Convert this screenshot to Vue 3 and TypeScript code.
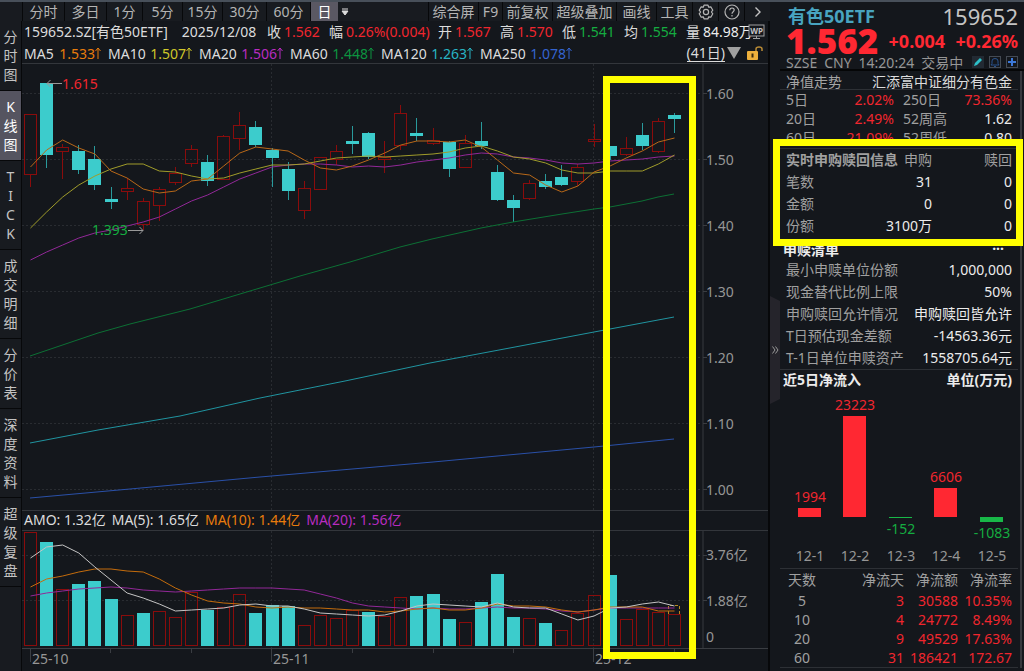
<script setup lang="ts">
interface Candle { up: boolean; top: number; bottom: number; high: number; low: number }

const x0 = 30.5
const step = 16.1
const cx = (i: number): number => Math.floor(x0 + step * i)

const raw: [number, number, number, number, number][] = [
  [1, 114, 174, 114, 187], [0, 83, 155, 83, 168], [1, 147, 151, 144, 179], [0, 151, 170, 145, 174],
  [0, 159, 185, 146, 190], [0, 199, 202, 187, 209], [1, 188, 191, 178, 200], [1, 201, 224, 198, 230],
  [1, 189, 205, 187, 221], [1, 173, 182, 167, 185], [1, 149, 163, 145, 167], [0, 162, 181, 155, 186],
  [1, 136, 179, 135, 180], [1, 125, 138, 112, 150], [0, 127, 145, 121, 147], [0, 150, 158, 148, 187],
  [0, 169, 191, 162, 200], [1, 188, 210, 181, 219], [1, 157, 189, 157, 189], [1, 151, 159, 145, 165],
  [0, 141, 144, 126, 154], [0, 133, 157, 132, 159], [1, 157, 159, 141, 173], [1, 113, 145, 105, 150],
  [0, 133, 136, 118, 141], [1, 140, 143, 128, 145], [0, 142, 169, 141, 177], [1, 143, 167, 135, 167],
  [0, 141, 146, 122, 149], [0, 172, 200, 165, 201], [0, 200, 208, 195, 222], [1, 183, 198, 180, 200],
  [0, 181, 187, 174, 189], [0, 177, 185, 165, 186], [1, 167, 181, 164, 186], [1, 139, 141, 124, 147],
  [0, 146, 156, 146, 160], [1, 148, 154, 137, 156], [0, 135, 146, 123, 150], [1, 121, 151, 118, 153],
  [0, 115, 119, 113, 133],
]
const candles: Candle[] = raw.map(([u, top, bottom, high, low]) => ({ up: u === 1, top, bottom, high, low }))

const volumes: [number, number][] = [
  [1, 532], [0, 542], [1, 589], [0, 584], [0, 581], [0, 599], [1, 615], [0, 613], [1, 611], [1, 617],
  [1, 592], [0, 610], [1, 607], [1, 594], [0, 613], [0, 605], [0, 606], [1, 625], [1, 615], [1, 618],
  [1, 610], [0, 612], [1, 616], [1, 597], [0, 596], [0, 594], [0, 619], [1, 622], [0, 602], [0, 574],
  [0, 617], [1, 618], [0, 623], [1, 630], [1, 613], [1, 595], [0, 575], [1, 619], [1, 609], [1, 612],
  [1, 614],
]

const line = (ys: number[]): string => ys.map((y, i) => `${(x0 + step * i).toFixed(1)},${y}`).join(' ')

const priceLines: { cls: string; points: string }[] = [
  { cls: 'ma250', points: '30,498 130,489 260,477 433,462 594,447 674,439' },
  { cls: 'ma120', points: '30,443 98,430 180,416 260,398 345,381 430,363 515,347 594,332 674,317' },
  { cls: 'ma60', points: '30,356 98,333 130,324 190,309 260,288 300,276 350,262 400,247 432,239 481,228 513,222 562,214 594,209 610,207 642,201 658,197 674,194' },
  { cls: 'ma20', points: line([260, 252, 245, 238, 233, 230, 226, 222, 217, 209, 201, 195, 187, 179, 173, 167, 165, 164, 164, 165, 167, 166, 167, 165, 162, 160, 158, 155, 153, 154, 157, 158, 160, 163, 164, 163, 161, 160, 159, 157, 156]) },
  { cls: 'ma10', points: line([228, 212, 197, 185, 176, 169, 164, 164, 171, 172, 176, 179, 178, 173, 169, 165, 165, 164, 161, 158, 157, 156, 157, 156, 155, 154, 152, 148, 146, 151, 157, 159, 163, 170, 173, 173, 171, 171, 171, 164, 155]) },
  { cls: 'ma5', points: line([167, 150, 140, 148, 154, 171, 178, 189, 193, 191, 181, 179, 166, 153, 147, 149, 151, 160, 168, 170, 166, 160, 153, 145, 141, 141, 142, 140, 147, 160, 173, 175, 185, 192, 186, 172, 166, 158, 151, 142, 138]) },
]

const volumeLines: { cls: string; points: string }[] = [
  { cls: 'v20', points: line([596, 593, 591, 589, 588, 587, 588, 590, 591, 592, 591, 590, 589, 588, 588, 588, 589, 590, 594, 598, 603, 606, 607, 608, 609, 608, 609, 609, 608, 607, 608, 608, 609, 611, 612, 610, 608, 608, 608, 608, 608]) },
  { cls: 'v10', points: line([587, 579, 576, 572, 569, 569, 571, 572, 579, 588, 595, 601, 603, 604, 607, 608, 607, 608, 608, 609, 610, 610, 612, 611, 609, 608, 610, 610, 608, 604, 606, 606, 607, 610, 612, 610, 607, 607, 607, 611, 611]) },
  { cls: 'v5', points: line([558, 547, 545, 553, 567, 580, 593, 598, 604, 611, 610, 609, 608, 605, 604, 606, 606, 609, 613, 614, 615, 616, 615, 611, 606, 604, 605, 606, 607, 603, 607, 608, 608, 614, 620, 616, 608, 607, 604, 602, 606]) },
]

const priceAxis = [
  { label: '1.60', y: 94 }, { label: '1.50', y: 160 }, { label: '1.40', y: 226 }, { label: '1.30', y: 292 },
  { label: '1.20', y: 358 }, { label: '1.10', y: 424 }, { label: '1.00', y: 490 },
]
const months = [{ label: '25-10', x: 30 }, { label: '25-11', x: 271 }, { label: '25-12', x: 593 }]
const smallTicks = [110, 191, 352, 433, 513, 674]

const periods = [
  { t: '分时', c: 'w42' }, { t: '多日', c: 'w42' }, { t: '1分', c: 'w36' }, { t: '5分', c: 'w40' },
  { t: '15分', c: 'w40' }, { t: '30分', c: 'w44' }, { t: '60分', c: 'w44' }, { t: '日', c: 'w28 on' },
]
const tools = [
  { t: '综合屏', c: 'w50' }, { t: 'F9', c: 'w24' }, { t: '前复权', c: 'w50' },
  { t: '超级叠加', c: 'w64' }, { t: '画线', c: 'w40' }, { t: '工具', c: 'w36' },
]
const sideTabs = ['分时图', 'K线图', 'TICK', '成交明细', '分价表', '深度资料', '超级复盘']

const quotes = [
  { k: '收', v: '1.562', c: 'red', w: 'q62' }, { k: '幅', v: '0.26%(0.004)', c: 'red', w: 'q109' },
  { k: '开', v: '1.567', c: 'red', w: 'q62' }, { k: '高', v: '1.570', c: 'red', w: 'q62' },
  { k: '低', v: '1.541', c: 'green', w: 'q62' }, { k: '均', v: '1.554', c: 'green', w: 'q62' },
  { k: '量', v: '84.98万', c: 'white', w: 'q62' },
]
const averages = [
  { k: 'MA5', v: '1.533', c: 'orange', w: 'm84' }, { k: 'MA10', v: '1.507', c: 'yellow', w: 'm91' },
  { k: 'MA20', v: '1.506', c: 'purple', w: 'm91' }, { k: 'MA60', v: '1.448', c: 'dgreen', w: 'm91' },
  { k: 'MA120', v: '1.263', c: 'cyan', w: 'm99' }, { k: 'MA250', v: '1.078', c: 'blue', w: 'm99' },
]

const perf = [
  ['5日', '2.02%', '250日', '73.36%', 'red'],
  ['20日', '2.49%', '52周高', '1.62', 'white'],
  ['60日', '21.09%', '52周低', '0.80', 'white'],
]
const subs = [['笔数', '31', '0'], ['金额', '0', '0'], ['份额', '3100万', '0']]
const list = [
  ['最小申赎单位份额', '1,000,000'], ['现金替代比例上限', '50%'], ['申购赎回允许情况', '申购赎回皆允许'],
  ['T日预估现金差额', '-14563.36元'], ['T-1日单位申赎资产', '1558705.64元'],
]
const flows = [
  { d: '12-1', v: 1994 }, { d: '12-2', v: 23223 }, { d: '12-3', v: -152 }, { d: '12-4', v: 6606 }, { d: '12-5', v: -1083 },
].map((f, i) => {
  const h = Math.max(1, Math.round(Math.abs(f.v) / 230))
  return { ...f, x: Math.round(810 + 45.4 * i), h, y: f.v > 0 ? 517 - h : 517, ty: f.v > 0 ? 517 - h - 6 : 517 + h + 16 }
})
const days = [
  ['5', '3', '30588', '10.35%'], ['10', '4', '24772', '8.49%'],
  ['20', '9', '49529', '17.63%'], ['60', '31', '186421', '172.67'],
]
</script>

<template>
  <div class="app">
    <section class="left">
      <nav class="toolbar">
        <button v-for="p in periods" :key="p.t" type="button" :class="p.c">{{ p.t }}</button>
        <button type="button" class="drop" aria-label="更多周期">
          <svg width="8" height="8" viewBox="0 0 8 8"><path d="M1 1h6M1 3h6L4 7z" stroke="#ddd" fill="#ddd" stroke-width="1" /></svg>
        </button>
        <span class="spacer"></span>
        <button v-for="t in tools" :key="t.t" type="button" :class="t.c">{{ t.t }}</button>
        <button type="button" class="w26" aria-label="设置">
          <svg width="16" height="16" viewBox="0 0 16 16" fill="none" stroke="#b4b4b4" stroke-width="1.2">
            <path d="M6 1.2h4l.7 2 2.1-.4 2 3.4L13.400 8l1.400 1.800-2 3.400-2.100-.4-.7 2H6l-.7-2-2.100.4-2-3.400L2.600 8 1.200 6.200l2-3.400 2.100.4z" stroke-linejoin="round" />
            <circle cx="8" cy="8" r="2.600" />
          </svg>
        </button>
        <button type="button" class="w26" aria-label="帮助">
          <svg width="16" height="16" viewBox="0 0 16 16" fill="none" stroke="#b4b4b4" stroke-width="1.2">
            <circle cx="8" cy="8" r="7" />
            <path d="M5.800 6.200c0-3 4.500-2.800 4.400-.1C10.200 7.700 8 7.800 8 9.700M8 11v1.400" />
          </svg>
        </button>
        <button type="button" class="w26" aria-label="展开">
          <svg width="8" height="12" viewBox="0 0 8 12" fill="none" stroke="#c4c4c4" stroke-width="1.400"><path d="M1.500 1.500L6 6l-4.500 4.500" /></svg>
        </button>
      </nav>

      <div class="body">
        <aside class="side">
          <button v-for="s in sideTabs" :key="s" type="button" :class="{ on: s === 'K线图' }">
            <span v-for="(ch, i) in s.split('')" :key="i">{{ ch }}</span>
          </button>
        </aside>

        <main class="main">
          <div class="row info">
            <span class="symbol">159652.SZ[有色50ETF]</span>
            <span class="date">2025/12/08</span>
            <span v-for="q in quotes" :key="q.k" class="quote" :class="q.w">{{ q.k }}<b :class="q.c">{{ q.v }}</b></span>
            <svg class="wp" width="18" height="16" viewBox="0 0 18 16">
              <rect x="1" y="1" width="15" height="11" fill="#14171c" stroke="#a0a0a0" />
              <path d="M8.500 12v2M5 14.500h7" stroke="#a0a0a0" />
              <text x="8.500" y="10" text-anchor="middle" class="wptext">WP</text>
            </svg>
          </div>
          <div class="row avg">
            <span v-for="m in averages" :key="m.k" class="ma" :class="m.w">{{ m.k }}<b :class="m.c">{{ m.v }}<svg width="6" height="12" viewBox="0 0 6 12" fill="none" stroke="currentColor"><path d="M3 12V1M0.500 4L3 1l2.500 3" /></svg></b></span>
            <span class="range">
              <a href="#">(41日)</a>
              <svg width="14" height="12" viewBox="0 0 14 12"><path d="M0 0h14L7 12z" fill="#a0a0a0" /></svg>
              <svg class="lock" width="16" height="14" viewBox="0 0 16 14">
                <rect x="0" y="5" width="11" height="9" rx="1" fill="#eeb03c" />
                <path d="M9 5V3q0-2 3-2t3 2v2" fill="none" stroke="#b88a35" stroke-width="1.500" />
                <path d="M5.500 7.500v4" stroke="#3a2b10" stroke-width="2" />
              </svg>
            </span>
          </div>

          <svg class="chart" viewBox="22 64 746 446" role="img" aria-label="日K线">
            <g class="grid">
              <path v-for="a in priceAxis" :key="a.label" :d="`M22 ${a.y - 0.5}H702`" />
              <path d="M271.500 64V510M593.500 64V510" />
            </g>
            <path d="M703 64V510" class="axis" />
            <g v-for="(c, i) in candles" :key="i" :class="c.up ? 'up' : 'down'">
              <path v-if="c.high < c.top" :d="`M${cx(i) + 0.5} ${c.high}V${c.top}`" />
              <path v-if="c.low > c.bottom" :d="`M${cx(i) + 0.5} ${c.bottom}V${c.low}`" />
              <rect v-if="c.up" :x="cx(i) - 5.5" :y="c.top + 0.5" width="12" :height="c.bottom - c.top" />
              <rect v-else :x="cx(i) - 6" :y="c.top" width="13" :height="c.bottom - c.top" />
            </g>
            <polyline v-for="l in priceLines" :key="l.cls" :class="l.cls" class="curve" :points="l.points" />
            <path d="M62 83.500H47M50.500 80L47 83.500l3.500 3.500M128 230.500h15M139.500 227l3.500 3.500-3.500 3.500" class="arrow" />
            <text x="62" y="89" class="tred">1.615</text>
            <text x="92" y="235" class="tgreen">1.393</text>
            <g v-for="a in priceAxis" :key="a.y">
              <path :d="`M703 ${a.y - 0.5}h4`" class="tick" />
              <text x="706" :y="a.y + 5" class="tgray">{{ a.label }}</text>
            </g>
          </svg>

          <div class="row amo">
            <span>AMO: 1.32亿</span><span>MA(5): 1.65亿</span>
            <span class="orange">MA(10): 1.44亿</span><span class="purple">MA(20): 1.56亿</span>
          </div>

          <svg class="chart" viewBox="22 531 746 140" role="img" aria-label="成交额">
            <g class="grid">
              <path d="M22 555.500H702M22 600.500H702M271.500 531V648M593.500 531V648" />
            </g>
            <path d="M703 531V648" class="axis" />
            <path d="M22 648.500H768" class="tick" />
            <g v-for="(v, i) in volumes" :key="i" :class="v[0] ? 'up' : 'down'">
              <rect v-if="v[0]" :x="cx(i) - 5.5" :y="v[1] + 0.5" width="12" :height="645 - v[1]" />
              <rect v-else :x="cx(i) - 6" :y="v[1]" width="13" :height="646 - v[1]" />
            </g>
            <path d="M668.500 614v-8.500h11v8.500" class="forecast" />
            <polyline v-for="l in volumeLines" :key="l.cls" :class="l.cls" class="curve" :points="l.points" />
            <path d="M703 555.500h4M703 600.500h4" class="tick" />
            <text x="706" y="560" class="tgray">3.76亿</text>
            <text x="706" y="606" class="tgray">1.88亿</text>
            <text x="706" y="642" class="tgray">0</text>
            <path v-for="t in smallTicks" :key="t" :d="`M${t + 0.5} 649v4`" class="tick" />
            <g v-for="m in months" :key="m.label">
              <path :d="`M${m.x + 0.5} 649v13`" class="tick" />
              <text :x="m.x + 2" y="664" class="tgray">{{ m.label }}</text>
            </g>
          </svg>
          <div class="mark candles-mark"></div>
        </main>
      </div>
    </section>

    <aside class="panel">
      <button type="button" class="fold" aria-label="收起">
        <svg width="7" height="8" viewBox="0 0 7 8" fill="none" stroke="#999"><path d="M0.500 0.500L3 4 .5 7.500M3.500 .5L6 4 3.500 7.500" /></svg>
      </button>
      <header class="head">
        <div class="name"><strong>有色50ETF</strong><span>159652</span></div>
        <div class="price"><strong>1.562</strong><span>+0.004</span><span>+0.26%</span></div>
        <div class="meta">
          <span>SZSE</span><span>CNY</span><span>14:20:24</span><span>交易中</span>
          <span class="icons">
            <button type="button" aria-label="编辑"><svg width="12" height="12" viewBox="0 0 12 12"><rect width="12" height="12" fill="#222a33" /><path d="M2 10l1-3 5-5 2 2-5 5z" fill="#2dbfc8" /></svg></button>
            <button type="button" aria-label="提醒"><svg width="12" height="12" viewBox="0 0 12 12" fill="none"><rect x=".5" y=".5" width="11" height="11" stroke="#444a53" /><path d="M2 9h8L9 7.500V5q0-2.500-3-2.500T3 5v2.500zM5 10.500h2" stroke="#29538d" /></svg></button>
            <button type="button" aria-label="添加"><svg width="12" height="12" viewBox="0 0 12 12" fill="none"><rect x=".5" y=".5" width="11" height="11" stroke="#444a53" /><path d="M6 2v8M2 6h8" stroke="#3c78d8" stroke-width="2" /></svg></button>
          </span>
        </div>
      </header>

      <div class="content">
        <div class="trend"><span>净值走势</span><a href="#">汇添富中证细分有色金</a></div>
        <table class="perf">
          <tbody>
            <tr v-for="r in perf" :key="r[0]">
              <th scope="row">{{ r[0] }}</th><td class="red">{{ r[1] }}</td>
              <th scope="row" class="second">{{ r[2] }}</th><td :class="r[4]">{{ r[3] }}</td>
            </tr>
          </tbody>
        </table>
        <table class="subs">
          <thead><tr><th class="title">实时申购赎回信息</th><th>申购</th><th>赎回</th></tr></thead>
          <tbody>
            <tr v-for="r in subs" :key="r[0]"><th scope="row">{{ r[0] }}</th><td>{{ r[1] }}</td><td>{{ r[2] }}</td></tr>
          </tbody>
        </table>
        <div class="caption low"><h2>申赎清单</h2><button type="button" aria-label="更多">···</button></div>
        <dl class="list">
          <div v-for="r in list" :key="r[0]"><dt>{{ r[0] }}</dt><dd>{{ r[1] }}</dd></div>
        </dl>
        <div class="caption flow-caption"><h2>近5日净流入</h2><h2>单位(万元)</h2></div>
        <svg class="flow" viewBox="780 391 238 177" role="img" aria-label="近5日净流入">
          <g v-for="f in flows" :key="f.d">
            <rect :x="f.x - 12" :y="f.y" width="23" :height="f.h" :class="f.v > 0 ? 'in' : 'out'" />
            <text :x="f.x" :y="f.ty" :class="f.v > 0 ? 'tred' : 'tgreen'" text-anchor="middle">{{ f.v }}</text>
            <text :x="f.x" y="561" class="tgray" text-anchor="middle">{{ f.d }}</text>
          </g>
        </svg>
        <table class="days">
          <thead><tr><th>天数</th><th>净流天</th><th>净流额</th><th>净流率</th></tr></thead>
          <tbody>
            <tr v-for="r in days" :key="r[0]"><th scope="row">{{ r[0] }}</th><td>{{ r[1] }}</td><td>{{ r[2] }}</td><td>{{ r[3] }}</td></tr>
          </tbody>
        </table>
      </div>
      <div class="mark subs-mark"></div>
    </aside>
  </div>
</template>

<style>
body { margin: 0; background: #14171c; }
</style>

<style scoped>
.app, .app * { box-sizing: border-box; }
.app {
  display: grid;
  grid-template-columns: minmax(0, 1fr) 254px;
  min-height: 100vh;
  border-top: 2px solid #48505a;
  background: #14171c;
  color: #dcdcdc;
  font: 14px/20px "Noto Sans", "Noto Sans CJK SC", sans-serif;
  white-space: nowrap;
  overflow: hidden;
}
button { padding: 0; margin: 0; border: 0; background: none; color: inherit; font: inherit; }
a { color: inherit; text-decoration: none; }
svg { display: block; }
b { font-weight: 400; }

.toolbar { display: flex; height: 19px; padding-left: 22px; background: #181b20; }
.toolbar button {
  flex: none; display: flex; align-items: center; justify-content: center;
  border-left: 1px solid #07080a; color: #b4b4b4; line-height: 19px;
}
.toolbar .drop { width: 14px; border: 0; }
.toolbar .on { background: #5a5863; color: #fff; }
.spacer { flex: 1; }
.w24 { width: 24px; } .w26 { width: 26px; } .w28 { width: 28px; } .w36 { width: 36px; }
.w40 { width: 40px; } .w42 { width: 42px; } .w44 { width: 44px; } .w50 { width: 50px; } .w64 { width: 64px; }

.body { display: flex; }
.side { width: 22px; flex: none; background: #181b20; border-right: 1px solid #07080a; }
.side button { display: block; width: 100%; padding: 6px 0; border-bottom: 1px solid #07080a; color: #c4c4c4; }
.side button span { display: block; line-height: 19px; text-align: center; }
.side .on { background: #555460; color: #fff; }

.main { position: relative; flex: 1; min-width: 0; border-right: 2px solid #07080a; }
.row { display: flex; align-items: center; padding-left: 2px; }
.info { height: 22px; }
.avg { height: 21px; line-height: 21px; border-bottom: 1px solid #33363b; }
.amo { height: 21px; line-height: 18px; gap: 6px; align-items: flex-start; border-top: 1px solid #33363b; border-bottom: 1px solid #33363b; }
.symbol { width: 159px; }
.date { width: 86px; }
.quote { display: flex; gap: 3px; flex: none; }
.q62 { width: 62px; } .q109 { width: 109px; }
.wp { flex: none; margin-left: auto; margin-right: 2px; z-index: 1; }
.wptext { font: 700 8px "Noto Sans", sans-serif; fill: #c4c4c4; }
.ma { display: flex; justify-content: space-between; padding-right: 7px; flex: none; }
.ma b { display: flex; align-items: center; }
.m84 { width: 84px; } .m91 { width: 91px; } .m99 { width: 99px; }
.range { display: flex; align-items: center; gap: 2px; margin-left: auto; padding-right: 5px; }
.range a { line-height: 16px; border-bottom: 1px solid #dcdcdc; }
.lock { margin-left: 4px; }

.red { color: #f0262e; } .green { color: #14ac40; } .white { color: #ececec; }
.orange { color: #e87c0c; } .yellow { color: #cfc72a; } .purple { color: #b82cc0; }
.dgreen { color: #0c9440; } .cyan { color: #28b4c4; } .blue { color: #3464d0; }

.chart, .flow { width: 100%; height: auto; font: 14px "Noto Sans", "Noto Sans CJK SC", sans-serif; }
.grid { fill: none; stroke: #292c31; stroke-dasharray: 2 2; }
.axis { stroke: #25282d; stroke-width: 2; }
.tick { stroke: #3a3d42; }
.up { fill: none; stroke: #8a0c0c; }
.down { fill: #3ccccc; }
.down path { stroke: #299a9c; }
.curve { fill: none; stroke-width: 1; }
.ma5 { stroke: #b86818; } .ma10 { stroke: #a09c2a; } .ma20 { stroke: #922898; }
.ma60 { stroke: #0c7034; } .ma120 { stroke: #2094a0; } .ma250 { stroke: #2a50a8; }
.v5 { stroke: #c4c4c4; } .v10 { stroke: #c46c0c; } .v20 { stroke: #922898; }
.arrow { fill: none; stroke: #999; }
.forecast { fill: none; stroke: #b88a20; stroke-dasharray: 3 2; }
.tred { fill: #f0262e; } .tgreen { fill: #14ac40; } .tgray { fill: #969696; }

.mark { position: absolute; border: 7px solid #ff0; pointer-events: none; }
.candles-mark { left: 77.9%; width: 12.5%; top: 55px; bottom: 12px; }
.subs-mark { left: 3px; right: 1px; top: 137px; height: 107px; }

.panel { position: relative; }
.fold {
  position: absolute; left: 0; top: 294px; width: 10px; height: 108px; background: #25242b;
  display: flex; align-items: center; justify-content: center;
  clip-path: polygon(0 0, 100% 5px, 100% 103px, 0 100%);
}
.head { height: 69px; padding: 0 6px; margin-left: 10px; border-bottom: 2px solid #050607; }
.name { display: flex; justify-content: space-between; height: 25px; line-height: 28px; font-size: 22px; color: #c4c4c4; }
.name strong { font-size: 18px; color: #48a4c0; padding-left: 2px; }
.price { display: flex; align-items: center; justify-content: space-between; height: 28px; line-height: 28px; font-size: 18px; font-weight: 700; color: #ff2832; }
.price strong { font-size: 35px; }
.meta { display: flex; gap: 7px; height: 14px; line-height: 16px; color: #969696; }
.icons { display: flex; gap: 5px; margin-left: auto; align-items: center; }
.content { padding: 0 2px 0 10px; margin-right: 2px; border-right: 2px solid #36383d; }
.trend { display: flex; justify-content: space-between; height: 19px; padding: 0 6px; line-height: 21px; border-bottom: 1px solid #2d3035; color: #a4a4a4; }
.trend a { color: #dcdcdc; }
table { width: 100%; table-layout: fixed; border-collapse: separate; border-spacing: 0; padding: 0 6px; }
th, td { padding: 0; font-weight: 400; text-align: right; }
th { color: #a0a0a0; }
tbody th { text-align: left; }
.perf { padding-bottom: 1px; border-bottom: 1px solid #2d3035; }
.perf th, .perf td { height: 19px; line-height: 19px; }
.perf th:first-child { width: 48px; }
.perf td:nth-child(2) { width: 60px; }
.perf .second { padding-left: 9px; }
.subs th, .subs td { height: 22px; line-height: 22px; color: #ececec; }
.subs th { color: #a0a0a0; }
.subs th:first-child { width: 98px; text-align: left; }
.subs th:nth-child(2) { width: 48px; }
.subs .title { font-weight: 700; }
.caption { display: flex; justify-content: space-between; height: 22px; line-height: 22px; padding: 0 6px 0 3px; color: #ececec; }
.caption.low { padding-top: 2px; }
.caption.low button { padding-right: 8px; font-weight: 700; line-height: 18px; }
.flow-caption { height: 21px; line-height: 20px; }
h2 { margin: 0; font-size: 14px; font-weight: 700; }
.list { margin: 0; padding: 0 6px; border-bottom: 1px solid #2d3035; }
.list div { display: flex; justify-content: space-between; line-height: 22px; }
dt { color: #a0a0a0; }
dd { margin: 0; color: #ececec; }
.in { fill: #ff2832; } .out { fill: #18b848; }
.days { border-top: 1px solid #2d3035; border-bottom: 1px solid #2d3035; }
.days td { color: #f0262e; }
.days th, .days td { height: 19px; line-height: 19px; }
.days thead th { height: 22px; line-height: 22px; }
.days th:first-child { width: 32px; text-align: center; }
.days th:nth-child(3), .days th:nth-child(4) { width: 54px; }
</style>
